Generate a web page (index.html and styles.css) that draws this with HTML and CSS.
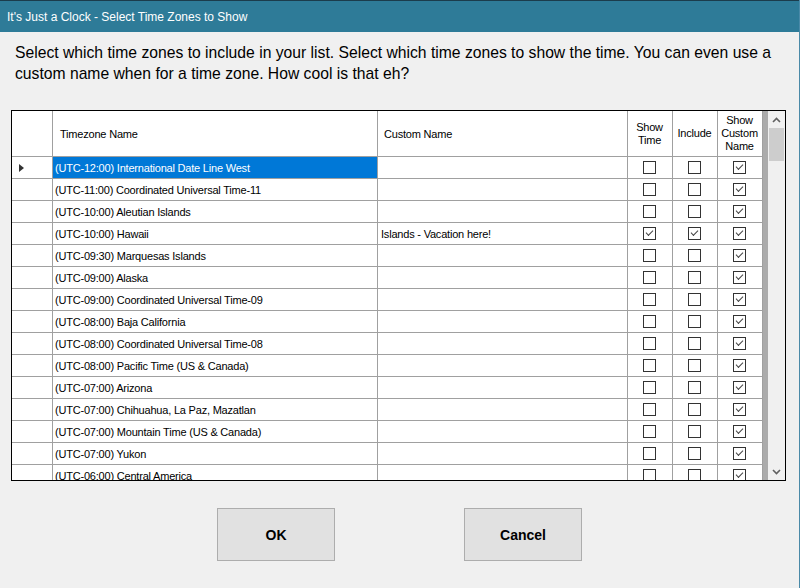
FILE: index.html
```html
<!DOCTYPE html>
<html>
<head>
<meta charset="utf-8">
<link rel="stylesheet" href="styles.css">
</head>
<body>
<div class="window">
  <div class="titlebar">It's Just a Clock - Select Time Zones to Show</div>
  <p class="intro">Select which time zones to include in your list. Select which time zones to show the time. You can even use a custom name when for a time zone. How cool is that eh?</p>
  <div class="grid">
    <div class="cells">
      <div class="row head">
        <div class="c rh"></div>
        <div class="c tz">Timezone Name</div>
        <div class="c cn">Custom Name</div>
        <div class="c ck">Show<br>Time</div>
        <div class="c ck">Include</div>
        <div class="c ck">Show<br>Custom<br>Name</div>
      </div>
      <div class="row">
        <div class="c rh"><span class="cur"></span></div>
        <div class="c tz sel">(UTC-12:00) International Date Line West</div>
        <div class="c cn"></div>
        <div class="c ck"><span class="cb"></span></div>
        <div class="c ck"><span class="cb"></span></div>
        <div class="c ck"><span class="cb on"></span></div>
      </div>
      <div class="row">
        <div class="c rh"></div>
        <div class="c tz">(UTC-11:00) Coordinated Universal Time-11</div>
        <div class="c cn"></div>
        <div class="c ck"><span class="cb"></span></div>
        <div class="c ck"><span class="cb"></span></div>
        <div class="c ck"><span class="cb on"></span></div>
      </div>
      <div class="row">
        <div class="c rh"></div>
        <div class="c tz">(UTC-10:00) Aleutian Islands</div>
        <div class="c cn"></div>
        <div class="c ck"><span class="cb"></span></div>
        <div class="c ck"><span class="cb"></span></div>
        <div class="c ck"><span class="cb on"></span></div>
      </div>
      <div class="row">
        <div class="c rh"></div>
        <div class="c tz">(UTC-10:00) Hawaii</div>
        <div class="c cn">Islands - Vacation here!</div>
        <div class="c ck"><span class="cb on"></span></div>
        <div class="c ck"><span class="cb on"></span></div>
        <div class="c ck"><span class="cb on"></span></div>
      </div>
      <div class="row">
        <div class="c rh"></div>
        <div class="c tz">(UTC-09:30) Marquesas Islands</div>
        <div class="c cn"></div>
        <div class="c ck"><span class="cb"></span></div>
        <div class="c ck"><span class="cb"></span></div>
        <div class="c ck"><span class="cb on"></span></div>
      </div>
      <div class="row">
        <div class="c rh"></div>
        <div class="c tz">(UTC-09:00) Alaska</div>
        <div class="c cn"></div>
        <div class="c ck"><span class="cb"></span></div>
        <div class="c ck"><span class="cb"></span></div>
        <div class="c ck"><span class="cb on"></span></div>
      </div>
      <div class="row">
        <div class="c rh"></div>
        <div class="c tz">(UTC-09:00) Coordinated Universal Time-09</div>
        <div class="c cn"></div>
        <div class="c ck"><span class="cb"></span></div>
        <div class="c ck"><span class="cb"></span></div>
        <div class="c ck"><span class="cb on"></span></div>
      </div>
      <div class="row">
        <div class="c rh"></div>
        <div class="c tz">(UTC-08:00) Baja California</div>
        <div class="c cn"></div>
        <div class="c ck"><span class="cb"></span></div>
        <div class="c ck"><span class="cb"></span></div>
        <div class="c ck"><span class="cb on"></span></div>
      </div>
      <div class="row">
        <div class="c rh"></div>
        <div class="c tz">(UTC-08:00) Coordinated Universal Time-08</div>
        <div class="c cn"></div>
        <div class="c ck"><span class="cb"></span></div>
        <div class="c ck"><span class="cb"></span></div>
        <div class="c ck"><span class="cb on"></span></div>
      </div>
      <div class="row">
        <div class="c rh"></div>
        <div class="c tz">(UTC-08:00) Pacific Time (US &amp; Canada)</div>
        <div class="c cn"></div>
        <div class="c ck"><span class="cb"></span></div>
        <div class="c ck"><span class="cb"></span></div>
        <div class="c ck"><span class="cb on"></span></div>
      </div>
      <div class="row">
        <div class="c rh"></div>
        <div class="c tz">(UTC-07:00) Arizona</div>
        <div class="c cn"></div>
        <div class="c ck"><span class="cb"></span></div>
        <div class="c ck"><span class="cb"></span></div>
        <div class="c ck"><span class="cb on"></span></div>
      </div>
      <div class="row">
        <div class="c rh"></div>
        <div class="c tz">(UTC-07:00) Chihuahua, La Paz, Mazatlan</div>
        <div class="c cn"></div>
        <div class="c ck"><span class="cb"></span></div>
        <div class="c ck"><span class="cb"></span></div>
        <div class="c ck"><span class="cb on"></span></div>
      </div>
      <div class="row">
        <div class="c rh"></div>
        <div class="c tz">(UTC-07:00) Mountain Time (US &amp; Canada)</div>
        <div class="c cn"></div>
        <div class="c ck"><span class="cb"></span></div>
        <div class="c ck"><span class="cb"></span></div>
        <div class="c ck"><span class="cb on"></span></div>
      </div>
      <div class="row">
        <div class="c rh"></div>
        <div class="c tz">(UTC-07:00) Yukon</div>
        <div class="c cn"></div>
        <div class="c ck"><span class="cb"></span></div>
        <div class="c ck"><span class="cb"></span></div>
        <div class="c ck"><span class="cb on"></span></div>
      </div>
      <div class="row">
        <div class="c rh"></div>
        <div class="c tz">(UTC-06:00) Central America</div>
        <div class="c cn"></div>
        <div class="c ck"><span class="cb"></span></div>
        <div class="c ck"><span class="cb"></span></div>
        <div class="c ck"><span class="cb on"></span></div>
      </div>
    </div>
    <div class="gutter"></div>
    <div class="vscroll">
      <div class="arrow"><svg width="9" height="6" viewBox="0 0 9 6"><polyline points="1,5 4.5,1.5 8,5" fill="none" stroke="#606060" stroke-width="1.6"/></svg></div>
      <div class="thumb"></div>
      <div class="track"></div>
      <div class="arrow"><svg width="9" height="6" viewBox="0 0 9 6"><polyline points="1,1 4.5,4.5 8,1" fill="none" stroke="#606060" stroke-width="1.6"/></svg></div>
    </div>
  </div>
  <div class="buttons">
    <button class="btn">OK</button>
    <button class="btn">Cancel</button>
  </div>
</div>
</body>
</html>
```
FILE: styles.css
```css
html, body {
  margin: 0;
  padding: 0;
  background: #f0f0f0;
  font-family: "Liberation Sans", Arial, sans-serif;
}

.window {
  width: 800px;
  height: 588px;
  box-sizing: border-box;
  border-right: 1px solid #4a8aa8;
  display: flex;
  flex-direction: column;
  overflow: hidden;
}

.titlebar {
  height: 32px;
  flex: none;
  box-sizing: border-box;
  border-top: 1px solid #1b3c4c;
  background: #2e7b98;
  color: #fff;
  font-size: 12px;
  padding-left: 7px;
  display: flex;
  align-items: center;
}

.intro {
  margin: 10px 0 0;
  padding: 0 12px 0 15px;
  font-size: 15.7px;
  line-height: 21px;
  color: #000;
}

.grid {
  flex: none;
  margin: 26px 0 0 11px;
  width: 775px;
  height: 371px;
  box-sizing: border-box;
  border: 1px solid #000;
  display: flex;
  background: #fff;
}

.cells {
  width: 751px;
  overflow: hidden;
  font-size: 11px;
  letter-spacing: -0.2px;
  color: #000;
}

.row {
  display: flex;
  height: 22px;
}

.row.head {
  height: 46px;
}

.c {
  box-sizing: border-box;
  height: 100%;
  border-right: 1px solid #a0a0a0;
  border-bottom: 1px solid #a0a0a0;
  display: flex;
  align-items: center;
  white-space: nowrap;
  overflow: hidden;
}

.rh { width: 41px; padding-left: 7px; }
.tz { width: 325px; padding-left: 2px; }
.cn { width: 250px; padding-left: 3px; }
.ck {
  width: 45px;
  justify-content: center;
  text-align: center;
  line-height: 13px;
  padding-right: 2px;
}
.head .tz { padding-left: 7px; }
.head .cn { padding-left: 6px; }
.head .ck { padding-right: 1px; }

.sel {
  background: #0078d7;
  color: #fff;
}

.cur {
  width: 0;
  height: 0;
  border-top: 4px solid transparent;
  border-bottom: 4px solid transparent;
  border-left: 5px solid #333;
}

.cb {
  position: relative;
  width: 13px;
  height: 13px;
  box-sizing: border-box;
  border: 1px solid #333;
  background: #fff;
}

.cb.on::after {
  content: "";
  position: absolute;
  left: 2px;
  top: 2px;
  width: 6px;
  height: 3px;
  border-left: 1.6px solid #444;
  border-bottom: 1.6px solid #444;
  transform: rotate(-45deg);
}

.gutter {
  width: 5px;
  background: #ababab;
}

.vscroll {
  width: 17px;
  background: #f0f0f0;
  display: flex;
  flex-direction: column;
}

.arrow {
  height: 17px;
  display: flex;
  align-items: center;
  justify-content: center;
}

.thumb {
  height: 33px;
  margin: 0 1px;
  background: #cdcdcd;
}

.track {
  flex: 1;
}

.buttons {
  margin-top: 27px;
  padding-left: 217px;
  display: flex;
  gap: 129px;
}

.btn {
  width: 118px;
  height: 53px;
  box-sizing: border-box;
  border: 1px solid #adadad;
  background: #e1e1e1;
  font-family: "Liberation Sans", Arial, sans-serif;
  font-weight: bold;
  font-size: 14px;
  color: #000;
  padding: 0;
}
```
